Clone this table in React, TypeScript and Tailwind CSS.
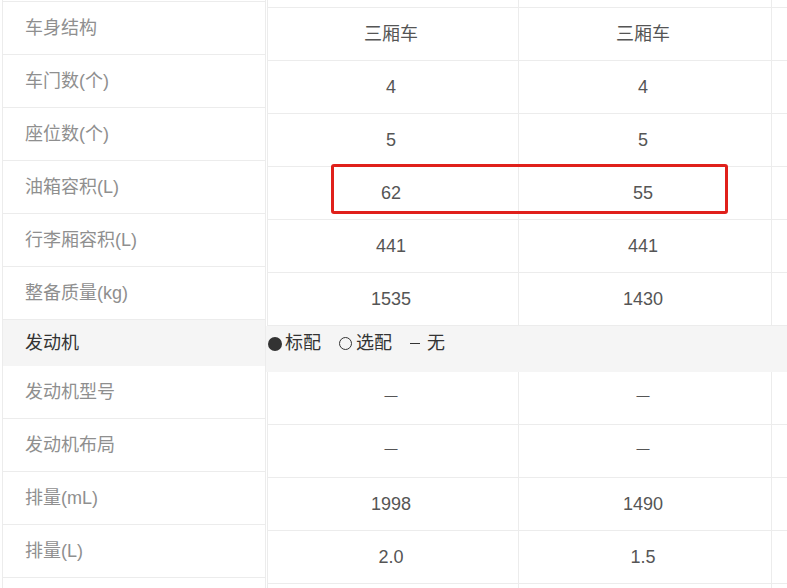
type Row = { label: string; a: string; b: string };

const topRows: Row[] = [
  { label: "车身结构", a: "三厢车", b: "三厢车" },
  { label: "车门数(个)", a: "4", b: "4" },
  { label: "座位数(个)", a: "5", b: "5" },
  { label: "油箱容积(L)", a: "62", b: "55" },
  { label: "行李厢容积(L)", a: "441", b: "441" },
  { label: "整备质量(kg)", a: "1535", b: "1430" },
];

const engineRows: Row[] = [
  { label: "发动机型号", a: "—", b: "—" },
  { label: "发动机布局", a: "—", b: "—" },
  { label: "排量(mL)", a: "1998", b: "1490" },
  { label: "排量(L)", a: "2.0", b: "1.5" },
  { label: "", a: "", b: "" },
];

function Cell({ v, w }: { v: string; w: string }) {
  return (
    <div className={`flex items-center justify-center border-r border-[#ececec] pr-[4px] ${w}`}>
      {v === "—" ? <span className="mb-[5px] text-[13px]">—</span> : v}
    </div>
  );
}

function ValueRow({ row }: { row: Row }) {
  return (
    <div className="flex h-[53px] shrink-0 border-b border-[#ececec]">
      <Cell v={row.a} w="w-[251px]" />
      <Cell v={row.b} w="w-[253px]" />
      <div className="flex-1" />
    </div>
  );
}

export default function App() {
  return (
    <div className="relative flex h-[588px] w-[787px] overflow-hidden bg-white font-['Liberation_Sans','Noto_Sans_CJK_SC',sans-serif] text-[18px]">
      {/* left label column, scrolled a few px above the values */}
      <div className="ml-[2px] flex w-[264px] shrink-0 flex-col border-r border-l border-[#ececec] text-[#8f8f8f]">
        <div className="h-[2px] shrink-0 border-b border-[#ececec]" />
        {topRows.map((r) => (
          <div key={r.label} className="flex h-[53px] shrink-0 items-center border-b border-[#ececec] pl-[22px]">
            {r.label}
          </div>
        ))}
        <div className="flex h-[46px] shrink-0 items-center bg-[#f5f5f5] pl-[22px] text-[#333]">发动机</div>
        {engineRows.map((r, i) => (
          <div key={i} className="flex h-[53px] shrink-0 items-center border-b border-[#ececec] pl-[22px]">
            {r.label}
          </div>
        ))}
      </div>

      {/* values */}
      <div className="ml-[1px] flex flex-1 flex-col border-l border-[#ececec] text-[#555]">
        <div className="flex h-[8px] shrink-0 border-b border-[#ececec]">
          <div className="w-[251px] border-r border-[#ececec]" />
          <div className="w-[253px] border-r border-[#ececec]" />
        </div>
        {topRows.map((r) => (
          <ValueRow key={r.label} row={r} />
        ))}
        <div className="-ml-[2px] flex h-[46px] shrink-0 items-center gap-[18px] bg-[#f5f5f5] pb-[11px] pl-[2px] text-[#333]">
          <span className="flex items-center gap-[3px]">
            <span className="inline-block h-[14px] w-[14px] rounded-full bg-[#333]" />
            标配
          </span>
          <span className="flex items-center gap-[4px]">
            <span className="inline-block h-[13px] w-[13px] rounded-full border-[1.5px] border-[#333]" />
            选配
          </span>
          <span className="flex items-center gap-[7px]">
            <span className="inline-block h-[1.5px] w-[10px] bg-[#333]" />
            无
          </span>
        </div>
        {engineRows.map((r, i) => (
          <ValueRow key={i} row={r} />
        ))}
      </div>

      {/* highlight box */}
      <div className="absolute left-[331px] top-[164px] h-[50px] w-[397px] rounded-[3px] border-[3px] border-[#e0201b]" />
    </div>
  );
}
